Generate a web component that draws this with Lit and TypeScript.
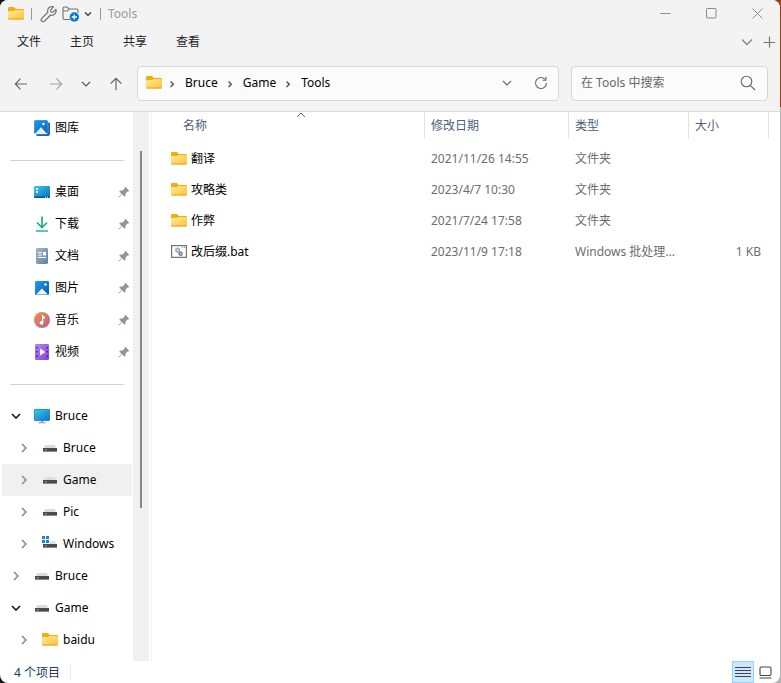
import { LitElement, html, css, svg, nothing, type TemplateResult } from "lit";
import { customElement, property, state } from "lit/decorators.js";
import { classMap } from "lit/directives/class-map.js";

type Glyph = { w: number; h: number; body: TemplateResult };

const grad = (id: string, from: string, to: string) => svg`
  <defs><linearGradient id=${id} x1="0" y1="0" x2="1" y2="1">
    <stop offset="0" stop-color=${from}/><stop offset="1" stop-color=${to}/>
  </linearGradient></defs>`;

const driveBody = svg`
  <path d="M3.500 5h9l2 3H1.500z" fill="#dedede"/>
  <rect x="1" y="8" width="14" height="3" fill="#4a4a4a"/>
  <rect x="1" y="11" width="14" height="1" fill="#8a8a8a"/>
  <rect x="3" y="9" width="1.500" height="1.500" fill="#35e04a"/>`;

const GLYPHS: Record<string, Glyph> = {
  folder: { w: 16, h: 16, body: svg`${grad("g", "#ffe9a0", "#fbc42f")}
    <path d="M0 2.200Q0 1 1.200 1h4.300q.6 0 1 .5L7.800 3H15q1 0 1 1v3H0z" fill="#f4ae0c"/>
    <path d="M0 6q0-1 1-1h4.600q.5 0 .9-.3l1-.7H15q1 0 1 1v7.500q0 1-1 1H1q-1 0-1-1z" fill="url(#g)"/>
    <path d="M.4 13h15.200" stroke="#e3a21a" fill="none"/>` },
  wrench: { w: 18, h: 18, body: svg`<path d="M15.900 4.300 13 7.200 10.800 7 10.600 4.800 13.600 1.900C11.300.9 8.200 2.100 7.700 5c-.1.800 0 1.500.2 2.200L1.800 13.300c-.9.900-.9 2.100-.1 2.900s2 .8 2.900-.1l6-6.100c3.300 1 6.400-2.200 5.300-5.700z" fill="none" stroke="#666" stroke-width="1.100" stroke-linejoin="round"/>` },
  newFolder: { w: 18, h: 18, body: svg`
    <path d="M8 14.500H2.500Q1 14.500 1 13V3.500Q1 2 2.500 2H5L7 4h7.500q1.500 0 1.500 1.500V8M1 6h4.500L7 4" fill="none" stroke="#707070" stroke-width="1.100"/>
    <circle cx="12.300" cy="12" r="4.700" fill="#0078d4"/>
    <path d="M12.300 9.400v5.200M9.700 12h5.200" stroke="#fff" stroke-width="1.300"/>` },
  down: { w: 10, h: 10, body: svg`<path d="M1 3l4 4 4-4" fill="none" stroke="currentColor" stroke-width="1.200"/>` },
  downWide: { w: 12, h: 12, body: svg`<path d="M1 3.500l5 5 5-5" fill="none" stroke="currentColor" stroke-width="1.400"/>` },
  downSmall: { w: 8, h: 8, body: svg`<path d="M1 2.500l3 3 3-3" fill="none" stroke="currentColor" stroke-width="1.200"/>` },
  downBold: { w: 10, h: 10, body: svg`<path d="M1 3l4 4 4-4" fill="none" stroke="#222" stroke-width="1.700"/>` },
  right: { w: 10, h: 10, body: svg`<path d="M3 1l4 4-4 4" fill="none" stroke="#8a8a8a" stroke-width="1.500"/>` },
  crumb: { w: 6, h: 8, body: svg`<path d="M1.500 1.500l2.800 2.700-2.800 2.800" fill="none" stroke="#555" stroke-width="1.400"/>` },
  sort: { w: 10, h: 6, body: svg`<path d="M1 5l4-4 4 4" fill="none" stroke="#666"/>` },
  back: { w: 14, h: 14, body: svg`<path d="M13 7H1.500M6.500 1.700 1.300 7l5.200 5.300" fill="none" stroke="#666" stroke-width="1.200"/>` },
  forward: { w: 14, h: 14, body: svg`<path d="M1 7h11.500M7.500 1.700 12.700 7l-5.200 5.300" fill="none" stroke="#a2a2a2" stroke-width="1.200"/>` },
  up: { w: 14, h: 14, body: svg`<path d="M7 13V1.500M1.700 6.500 7 1.300l5.300 5.200" fill="none" stroke="#666" stroke-width="1.200"/>` },
  refresh: { w: 14, h: 14, body: svg`<path d="M12.500 7A5.500 5.500 0 1 1 11 3.200M12 .8v3.400H8.600" fill="none" stroke="#6a6a6a" stroke-width="1.100"/>` },
  search: { w: 16, h: 16, body: svg`<circle cx="6.500" cy="6.500" r="5.300" fill="none" stroke="#6a6a6a" stroke-width="1.100"/><path d="M10.300 10.300 15 15" stroke="#6a6a6a" stroke-width="1.200"/>` },
  minimize: { w: 11, h: 11, body: svg`<path d="M.5 5.500h10" stroke="#8a8a8a"/>` },
  maximize: { w: 11, h: 11, body: svg`<rect x=".5" y=".5" width="9.500" height="9.500" rx=".8" fill="none" stroke="#8a8a8a"/>` },
  close: { w: 11, h: 11, body: svg`<path d="M.5.500l10 10M10.500.500l-10 10" stroke="#8a8a8a"/>` },
  plus: { w: 12, h: 12, body: svg`<path d="M6.500.500v11M.5 6.500h12" stroke="#777" stroke-width="1.200"/>` },
  gallery: { w: 16, h: 16, body: svg`${grad("g", "#1c9be6", "#0a62b8")}
    <path d="M5 13.500h8.500V2.500h1.300q1.200 0 1.200 1.200V14q0 2-2 2H4q-2 0-2-1.500z" fill="#1267bd"/>
    <rect width="14" height="14" rx="1.600" fill="url(#g)" stroke="#fff" stroke-width=".3"/>
    <path d="M.8 14 7 7.300 13.200 14z" fill="#e4f1fc"/><circle cx="9.500" cy="4" r="1.200" fill="#fff"/>` },
  desktop: { w: 16, h: 16, body: svg`${grad("g", "#3acfe0", "#0869c4")}
    <rect y="2" width="16" height="12" rx="1" fill="url(#g)"/>
    <path d="M2 4h2v1.700H2zM2 7h2v1.700H2z" fill="#fff"/><path d="M0 12.500h16V13q0 1-1 1H1q-1 0-1-1z" fill="#0a4f9a"/>
    <path d="M11 13.200h1M13 13.200h1" stroke="#fff"/>` },
  download: { w: 16, h: 16, body: svg`<path d="M8 .5V11M3 6.500l5 5 5-5" fill="none" stroke="#1fae8c" stroke-width="1.700"/><path d="M2 15h12" stroke="#1fb892" stroke-width="1.700"/>` },
  document: { w: 16, h: 16, body: svg`${grad("g", "#a3b8cc", "#5f7f9f")}
    <rect x="2" width="12" height="16" rx="1.400" fill="url(#g)"/>
    <path d="M4 4.500h4M4 7h4M4 9.500h8" stroke="#fff" stroke-width="1.200"/><rect x="9" y="4" width="3" height="3.500" fill="#fff"/>` },
  picture: { w: 16, h: 16, body: svg`${grad("g", "#1fa0ea", "#0759ae")}
    <rect x="1" y="1" width="14" height="14" rx="1.200" fill="url(#g)"/>
    <path d="M2 14.500 8 8.500l6 6z" fill="#edf6fd"/><circle cx="11.500" cy="4.500" r="1.200" fill="#fff"/>` },
  music: { w: 16, h: 16, body: svg`${grad("g", "#f39147", "#b3608f")}
    <circle cx="8" cy="8" r="8" fill="url(#g)"/>
    <path d="M8 3h1q.5 2 2 2v1.600q-1 0-1.700-.6V11H8z" fill="#fff"/><circle cx="7.500" cy="10.800" r="1.900" fill="#fff"/>` },
  video: { w: 16, h: 16, body: svg`${grad("g", "#b983f8", "#8040dc")}
    <rect x="1" width="14" height="16" rx="1.200" fill="url(#g)"/>
    <path d="M2 3h1.500v1.500H2zM2 7h1.500v1.500H2zM2 11.500h1.500V13H2zM12.500 3H14v1.500h-1.500zM12.500 7H14v1.500h-1.500zM12.500 11.500H14V13h-1.500z" fill="#4b2385"/>
    <path d="M6 4.500 11.500 8 6 11.500z" fill="#fff"/>` },
  pc: { w: 16, h: 16, body: svg`${grad("g", "#35d0e6", "#0a70ca")}
    <path d="M7 12h2v3H7z" fill="#9aa5ad"/><path d="M4.500 14.700h7" stroke="#9aa5ad" stroke-width="1.200"/>
    <rect x=".4" y="1.400" width="15.200" height="11.200" rx=".8" fill="url(#g)" stroke="#1670a8" stroke-width=".8"/>` },
  drive: { w: 16, h: 16, body: driveBody },
  windrive: { w: 16, h: 16, body: svg`${driveBody}
    <path d="M0 0h8v8H0z" fill="#fff"/>
    <path d="M0 0h3v3H0zM4 0h3v3H4zM0 4h3v3H0zM4 4h3v3H4z" fill="#1286d8"/>` },
  pin: { w: 12, h: 12, body: svg`<path d="M7.300.800 11.200 4.700 10.400 5.500 9.800 5.200 7.600 7.500 7.400 10 6.400 10.700 4 8.300 1 11.500 .5 11 3.600 7.900 1.300 5.500 2 4.600 4.600 4.400 6.900 2.200 6.500 1.600z" fill="#8b979f"/>` },
  bat: { w: 16, h: 16, body: svg`<path d="M.6 1.600h14.800v11.800H.6z" fill="#fff" stroke="#77756f" stroke-width="1.200"/>
    <path d="M11 3.500h1M13 3.500h1" stroke="#666" stroke-width=".8"/>
    <circle cx="6.700" cy="6" r="1.800" fill="#dfe4e8" stroke="#a3adb6" stroke-width="1.600"/>
    <circle cx="9.700" cy="9.700" r="1.500" fill="#fff" stroke="#6f7b84" stroke-width="1.400"/><path d="M7.300 8v3" stroke="#a9b3bb"/>` },
  details: { w: 16, h: 13, body: svg`<path d="M0 1.500h16M0 4.500h16M0 7.500h16M0 10.500h16" stroke="#444"/>` },
  tiles: { w: 13, h: 13, body: svg`<rect x="1" y="1" width="11" height="8.500" rx="1.200" fill="none" stroke="#444" stroke-width="1.100"/><path d="M.5 12h12" stroke="#444"/>` },
};

@customElement("ui-glyph")
class UiGlyph extends LitElement {
  @property() name = "folder";
  static styles = css`
    :host { display: inline-flex; flex: none; }
    svg { display: block; }
  `;
  render() {
    const g = GLYPHS[this.name];
    return html`<svg width=${g.w} height=${g.h} viewBox="0 0 ${g.w} ${g.h}" aria-hidden="true">${g.body}</svg>`;
  }
}

const shared = css`
  * { box-sizing: border-box; }
  button, a, input {
    font: inherit; color: inherit; background: none; border: 0; margin: 0; padding: 0;
    text-decoration: none; text-align: left;
  }
  button { display: inline-flex; align-items: center; justify-content: center; }
  ul, ol { list-style: none; margin: 0; padding: 0; }
`;

interface TreeNode { key: string; label: string; icon: string; depth: number; open: boolean }
const QUICK = [
  ["桌面", "desktop"], ["下载", "download"], ["文档", "document"],
  ["图片", "picture"], ["音乐", "music"], ["视频", "video"],
];
const TREE: TreeNode[] = [
  { key: "pc", label: "Bruce", icon: "pc", depth: 0, open: true },
  { key: "pc-bruce", label: "Bruce", icon: "drive", depth: 1, open: false },
  { key: "pc-game", label: "Game", icon: "drive", depth: 1, open: false },
  { key: "pc-pic", label: "Pic", icon: "drive", depth: 1, open: false },
  { key: "pc-win", label: "Windows", icon: "windrive", depth: 1, open: false },
  { key: "bruce", label: "Bruce", icon: "drive", depth: 0, open: false },
  { key: "game", label: "Game", icon: "drive", depth: 0, open: true },
  { key: "baidu", label: "baidu", icon: "folder", depth: 1, open: false },
];

@customElement("side-nav")
class SideNav extends LitElement {
  @state() private selected = "pc-game";
  static styles = [shared, css`
    :host { display: flex; flex: none; width: 149px; }
    nav { flex: 1; min-width: 0; padding: 0 1px 0 2px; }
    .row { display: flex; align-items: center; height: 32px; border-radius: 1px; }
    .row.selected { background: #f0f0f0; }
    .quick { padding: 0 2px 0 32px; }
    .link { display: flex; align-items: center; gap: 5px; flex: 1; height: 100%; min-width: 0; white-space: nowrap; }
    hr { border: 0; border-top: 1px solid #d2d2d2; margin: 16px 8px 15px; }
    .toggle { width: 16px; height: 100%; margin: 0 10px 0 6px; }
    .child .toggle { margin-left: 14px; }
    .scroll { width: 16px; background: #f0f0f0; display: flex; flex-direction: column; align-items: center; padding-top: 39px; }
    .thumb { width: 2px; height: 70%; background: #868686; }
  `];
  render() {
    return html`
      <nav aria-label="导航窗格">
        <div class="row quick"><a class="link" href="#gallery"><ui-glyph name="gallery"></ui-glyph>图库</a></div>
        <hr>
        <ul>${QUICK.map(([label, icon]) => html`
          <li class="row quick">
            <a class="link" href="#${icon}"><ui-glyph name=${icon}></ui-glyph>${label}</a>
            <ui-glyph name="pin"></ui-glyph>
          </li>`)}</ul>
        <hr>
        <ul>${TREE.map((n) => html`
          <li class=${classMap({ row: true, child: n.depth > 0, selected: n.key === this.selected })}>
            <button class="toggle" aria-label="展开或折叠 ${n.label}" aria-expanded=${n.open}>
              <ui-glyph name=${n.open ? "downBold" : "right"}></ui-glyph>
            </button>
            <a class="link" href="#${n.key}" @click=${() => (this.selected = n.key)}>
              <ui-glyph name=${n.icon}></ui-glyph>${n.label}</a>
          </li>`)}</ul>
      </nav>
      <div class="scroll"><div class="thumb"></div></div>`;
  }
}

const FILES = [
  { name: "翻译", icon: "folder", date: "2021/11/26 14:55", type: "文件夹", size: "" },
  { name: "攻略类", icon: "folder", date: "2023/4/7 10:30", type: "文件夹", size: "" },
  { name: "作弊", icon: "folder", date: "2021/7/24 17:58", type: "文件夹", size: "" },
  { name: "改后缀.bat", icon: "bat", date: "2023/11/9 17:18", type: "Windows 批处理文件", size: "1 KB" },
];
const COLUMNS = ["名称", "修改日期", "类型", "大小"];

@customElement("file-list")
class FileList extends LitElement {
  static styles = [shared, css`
    :host { display: block; flex: 1; min-width: 0; margin-left: 2px; border-left: 1px solid #f3f3f3; }
    table { width: 100%; border-collapse: collapse; table-layout: fixed; }
    .date { width: 144px; }
    .type { width: 120px; }
    .size { width: 80px; }
    .rest { width: 11px; }
    th, td { padding: 0; font-weight: 400; text-align: left; }
    th { height: 31px; vertical-align: top; color: #4c607a; }
    th button { position: relative; width: 100%; height: 27px; padding: 0 6px; justify-content: flex-start; border-right: 1px solid #e2e2e2; }
    th:first-child { padding-left: 25px; }
    .sort { position: absolute; top: 0; left: calc(50% - 5px); }
    td { height: 31px; color: #6d6d6d; white-space: nowrap; overflow: hidden; text-overflow: ellipsis; }
    td + td { padding: 0 6px; }
    td:first-child { padding-left: 19px; }
    td:nth-child(3) { padding-right: 10px; }
    td:nth-child(4) { padding-right: 8px; text-align: right; }
    .file { display: flex; align-items: center; gap: 4px; color: #000; }
  `];
  render() {
    return html`<table>
      <colgroup><col><col class="date"><col class="type"><col class="size"><col class="rest"></colgroup>
      <thead><tr>${COLUMNS.map((c, i) => html`<th scope="col"><button>${c}${i === 0
        ? html`<ui-glyph class="sort" name="sort"></ui-glyph>` : nothing}</button></th>`)}</tr></thead>
      <tbody>${FILES.map((f) => html`<tr>
        <td><a class="file" href="#${f.name}"><ui-glyph name=${f.icon}></ui-glyph>${f.name}</a></td>
        <td>${f.date}</td><td>${f.type}</td><td>${f.size}</td></tr>`)}</tbody>
    </table>`;
  }
}

@customElement("app-root")
class AppRoot extends LitElement {
  static styles = [shared, css`
    :host {
      display: flex; min-height: 100vh; padding-right: 1px; box-sizing: border-box;
      font: 12px/16px "Noto Sans", "Noto Sans CJK SC", sans-serif; color: #000;
      background: linear-gradient(#a23c12 107px, #b4b4b4 107px) right / 50% 100% no-repeat, #151515;
    }
    .window { flex: 1; min-width: 0; display: flex; flex-direction: column; background: #fff; border-radius: 8px; overflow: hidden; }
    header { background: #f3f3f3; border-bottom: 1px solid #dadada; }
    .bar { display: flex; align-items: center; }
    .title { height: 27px; padding-left: 8px; }
    .sep { width: 1px; height: 12px; background: #9a9a9a; }
    .tools { display: flex; align-items: center; gap: 4px; margin: 0 8px; }
    .tools .more { color: #333; }
    .title .sep:first-of-type { margin-left: 7px; }
    h1 { flex: 1; margin: 0 0 0 7px; font: inherit; color: #999; }
    .caption { width: 46px; height: 27px; }
    .menu { height: 29px; padding: 0 5px 0 17px; gap: 29px; color: #222; }
    .menu .right { display: flex; gap: 10px; margin-left: auto; color: #888; }
    .nav { height: 55px; padding: 0 12px 0 6px; }
    .nav > button { width: 30px; height: 30px; color: #555; }
    .nav > .fwd { margin-left: 5px; }
    .nav > .up { margin: 0 6px 0 0; }
    .box { display: flex; align-items: center; height: 35px; background: #fbfbfb; border: 1px solid #d6d6d6; border-radius: 4px; }
    .address { flex: 1; min-width: 0; padding: 0 10px 1px 8px; }
    .crumbs { display: flex; flex: 1; }
    .crumbs li { display: flex; align-items: center; }
    .crumbs a { margin: 0 9px 0 10px; }
    .crumbs li ui-glyph { margin-top: 2px; }
    .crumbs li:first-child { margin-left: 7px; }
    .address button { width: 34px; height: 30px; color: #666; }
    .address .reload { width: 14px; margin-left: 10px; }
    .search { width: 197px; margin-left: 12px; padding: 0 11px 1px 9px; }
    .search input { flex: 1; min-width: 0; outline: 0; }
    .search input::placeholder { color: #666; opacity: 1; }
    main { flex: 1; display: flex; }
    footer { display: flex; align-items: center; height: 22px; padding: 0 4px 0 14px; color: #24385b; }
    .count { padding: 1px 10px 0 0; border-right: 1px solid #ededed; }
    .views { display: flex; margin-left: auto; }
    .views button { width: 22px; height: 22px; border: 1px solid transparent; }
    .views .on { background: #cce8ff; border-color: #99d1ff; }
  `];
  render() {
    return html`<div class="window">
      <header>
        <div class="bar title">
          <ui-glyph name="folder"></ui-glyph>
          <div class="sep"></div>
          <div class="tools">
            <button aria-label="属性"><ui-glyph name="wrench"></ui-glyph></button>
            <button aria-label="新建文件夹"><ui-glyph name="newFolder"></ui-glyph></button>
            <button class="more" aria-label="自定义快速访问工具栏"><ui-glyph name="downSmall"></ui-glyph></button>
          </div>
          <div class="sep"></div>
          <h1>Tools</h1>
          <button class="caption" aria-label="最小化"><ui-glyph name="minimize"></ui-glyph></button>
          <button class="caption" aria-label="最大化"><ui-glyph name="maximize"></ui-glyph></button>
          <button class="caption" aria-label="关闭"><ui-glyph name="close"></ui-glyph></button>
        </div>
        <div class="bar menu">
          ${["文件", "主页", "共享", "查看"].map((m) => html`<button>${m}</button>`)}
          <div class="right">
            <button aria-label="展开功能区"><ui-glyph name="downWide"></ui-glyph></button>
            <button aria-label="新建标签页"><ui-glyph name="plus"></ui-glyph></button>
          </div>
        </div>
        <div class="bar nav">
          <button aria-label="后退"><ui-glyph name="back"></ui-glyph></button>
          <button class="fwd" aria-label="前进"><ui-glyph name="forward"></ui-glyph></button>
          <button aria-label="最近浏览的位置"><ui-glyph name="down"></ui-glyph></button>
          <button class="up" aria-label="上移"><ui-glyph name="up"></ui-glyph></button>
          <div class="box address">
            <ui-glyph name="folder"></ui-glyph>
            <ol class="crumbs">
              ${["Bruce", "Game", "Tools"].map((c) => html`<li><ui-glyph name="crumb"></ui-glyph><a href="#${c}">${c}</a></li>`)}
            </ol>
            <button aria-label="以前的位置"><ui-glyph name="down"></ui-glyph></button>
            <button class="reload" aria-label="刷新"><ui-glyph name="refresh"></ui-glyph></button>
          </div>
          <div class="box search">
            <input type="search" placeholder="在 Tools 中搜索" aria-label="在 Tools 中搜索">
            <ui-glyph name="search"></ui-glyph>
          </div>
        </div>
      </header>
      <main><side-nav></side-nav><file-list></file-list></main>
      <footer>
        <span class="count">4 个项目</span>
        <div class="views">
          <button class="on" aria-label="详细信息"><ui-glyph name="details"></ui-glyph></button>
          <button aria-label="大缩略图"><ui-glyph name="tiles"></ui-glyph></button>
        </div>
      </footer>
    </div>`;
  }
}
